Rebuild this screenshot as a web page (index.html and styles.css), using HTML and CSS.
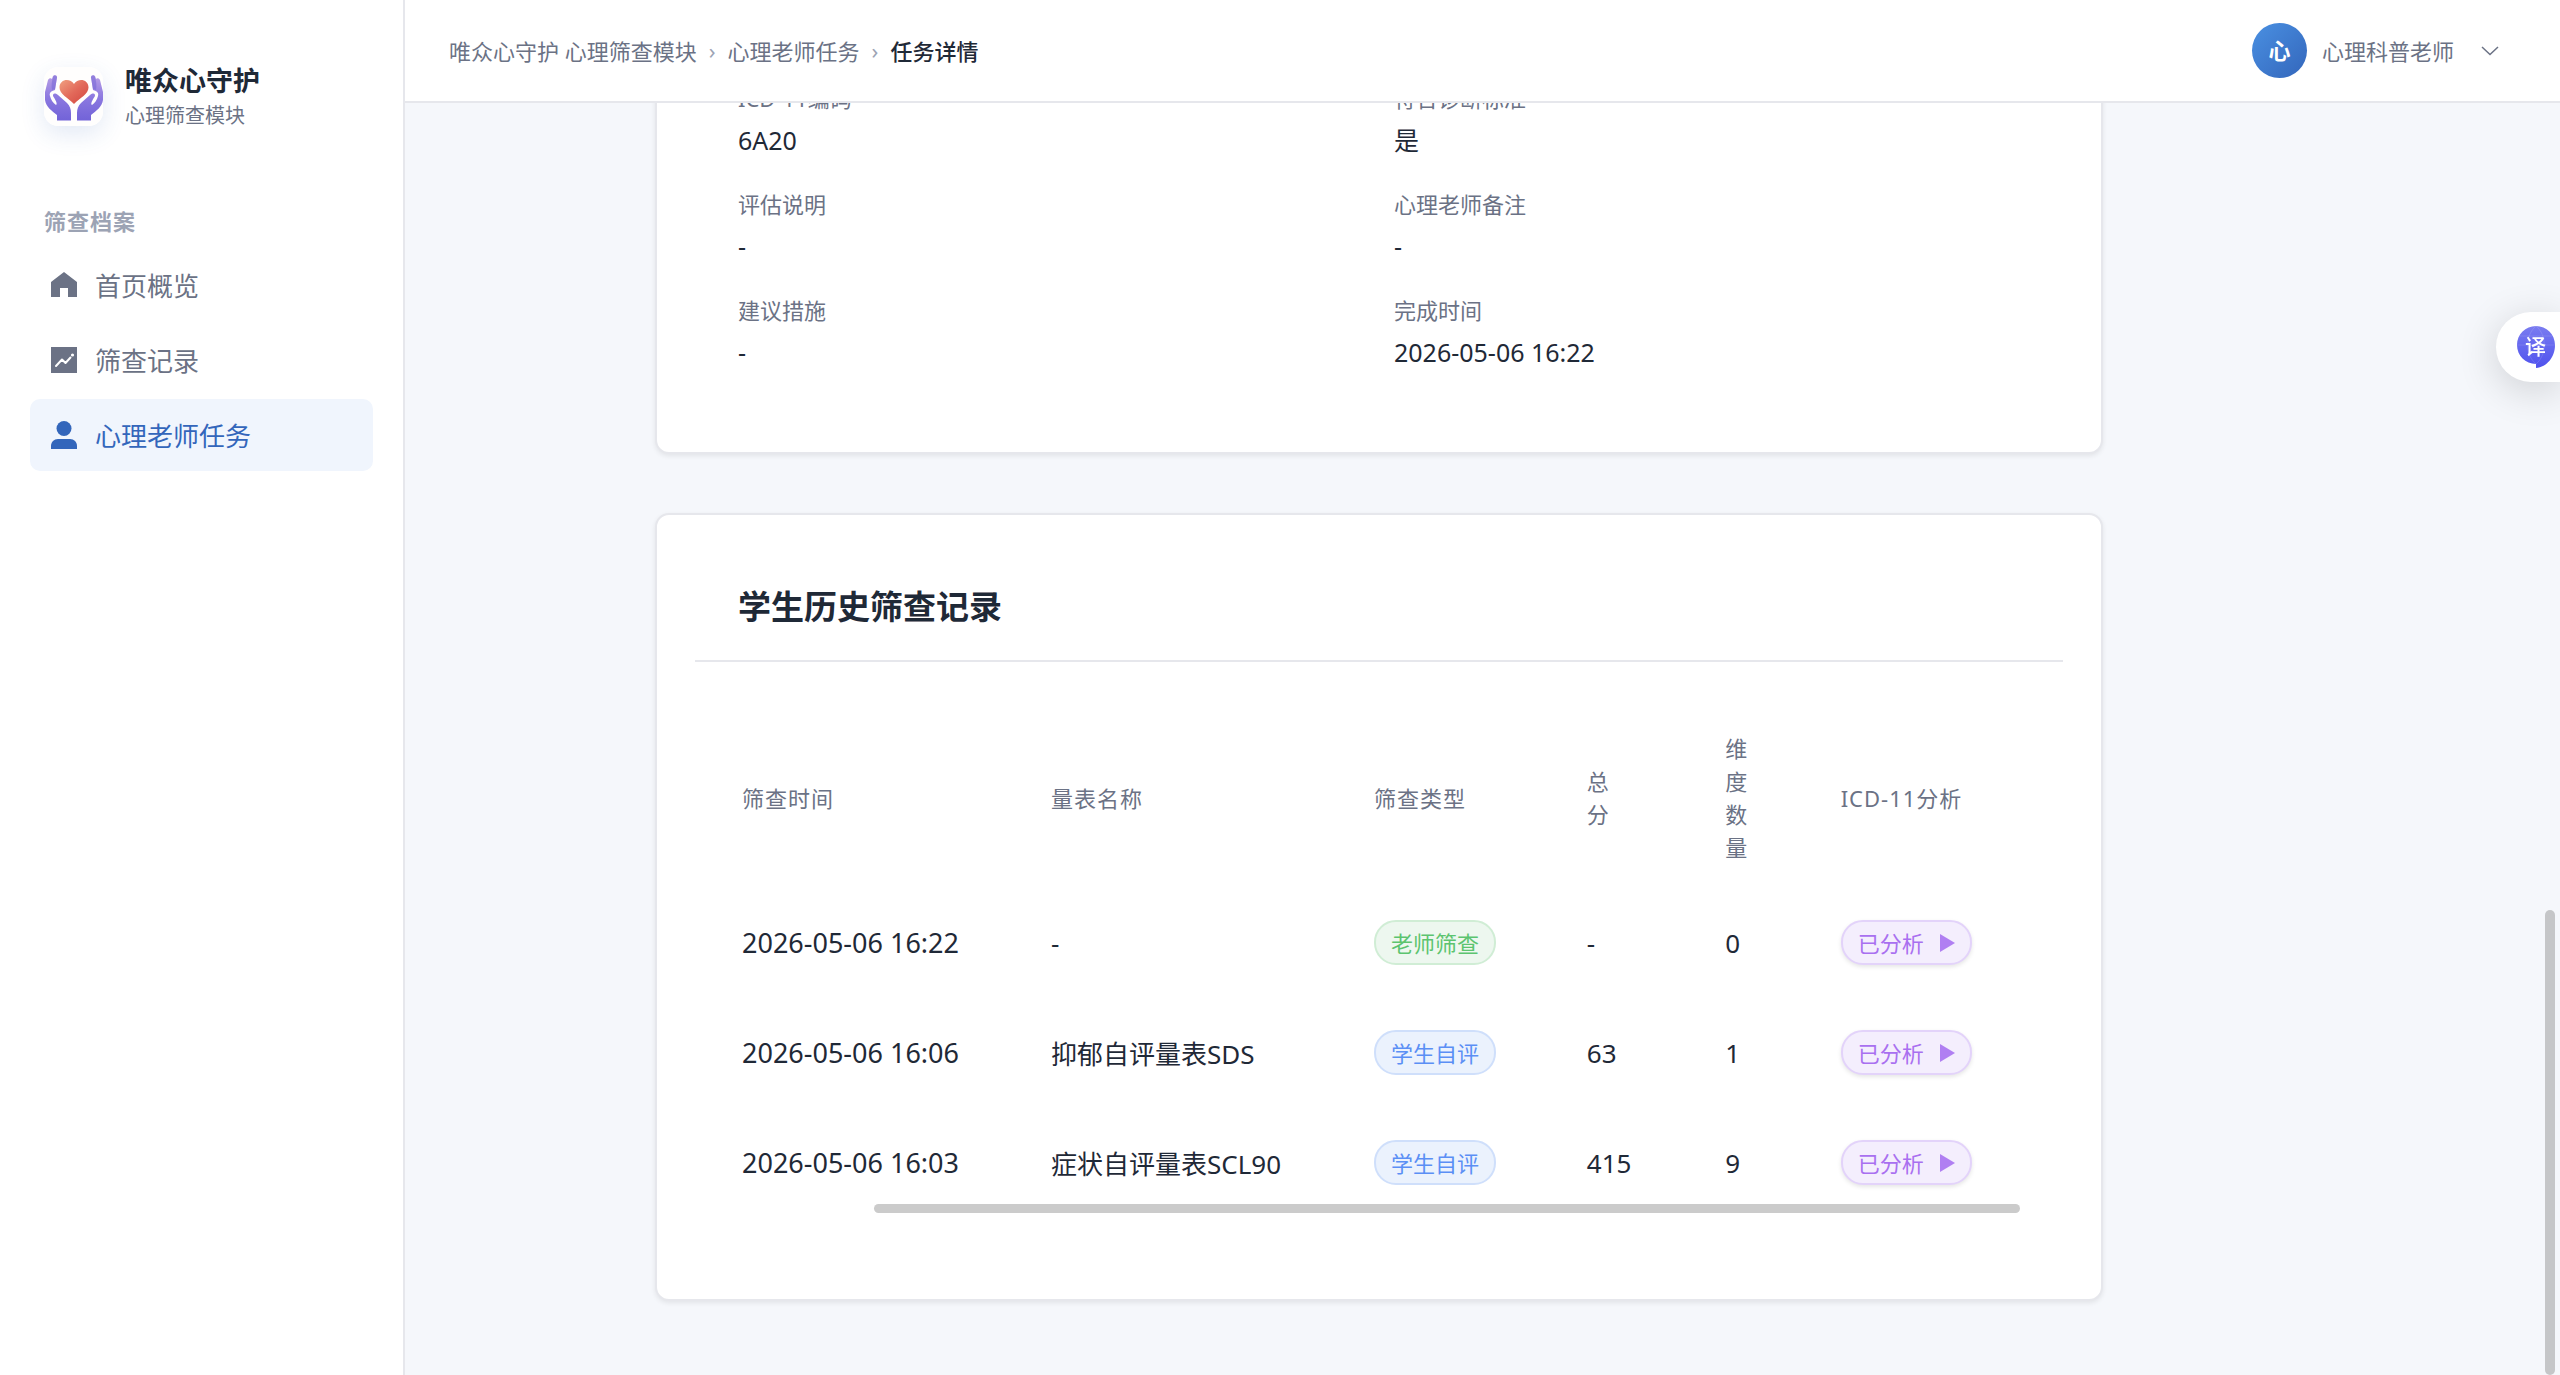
FILE: index.html
```html
<!DOCTYPE html>
<html lang="zh-CN">

<head>
    <meta charset="UTF-8">
    <meta name="viewport" content="width=device-width, initial-scale=1.0">
    <title>任务详情 | 唯众心守护</title>
    <link rel="stylesheet" href="styles.css">
</head>

<body>
    <div class="app">
        <!-- 侧边栏 -->
        <aside class="sidebar">
            <div class="brand">
                <svg class="brand-logo" viewBox="0 0 59 59" aria-hidden="true">
                    <defs>
                        <linearGradient id="hand" x1="0" y1="0" x2="0" y2="1">
                            <stop offset="0" stop-color="#b9a0e6"/>
                            <stop offset="0.5" stop-color="#8b78e0"/>
                            <stop offset="1" stop-color="#7263d8"/>
                        </linearGradient>
                        <linearGradient id="heart" x1="0" y1="0" x2="1" y2="1">
                            <stop offset="0" stop-color="#f0a080"/>
                            <stop offset="0.5" stop-color="#e2695a"/>
                            <stop offset="1" stop-color="#d2463f"/>
                        </linearGradient>
                    </defs>
                    <rect width="59" height="59" rx="14" fill="#fffefd"/>
                    <path fill="url(#heart)" d="M30 37C24 31 15.500 27 15.500 20.500C15.500 12 26 10.500 30 17C34 10.500 44.500 12 44.500 20.500C44.500 27 36 31 30 37Z"/>
                    <g>
                        <path fill="url(#hand)" d="M4 13C5 11 7 10.500 8 12L9 9C10 7.500 13 8 13 10.500L11 23C7 24 5 26 6 29C7 33 9 36 12 38C14 37 11 32 9 29C9 26 11 26 14 28L23 36C26 39 27 42 27 46L27 53.500L13 53.500L13 48C8 44 2 40 1 33L1 25Z"/>
                        <path fill="#7466d6" opacity="0.55" d="M9 10C10 7.500 13 8 13 10.500L11 22L8 23C7 18 8 14 9 10Z"/>
                    </g>
                    <g transform="matrix(-1 0 0 1 60 0)">
                        <path fill="url(#hand)" d="M4 13C5 11 7 10.500 8 12L9 9C10 7.500 13 8 13 10.500L11 23C7 24 5 26 6 29C7 33 9 36 12 38C14 37 11 32 9 29C9 26 11 26 14 28L23 36C26 39 27 42 27 46L27 53.500L13 53.500L13 48C8 44 2 40 1 33L1 25Z"/>
                        <path fill="#7466d6" opacity="0.55" d="M9 10C10 7.500 13 8 13 10.500L11 22L8 23C7 18 8 14 9 10Z"/>
                    </g>
                </svg>
                <div class="brand-text">
                    <div class="brand-title">唯众心守护</div>
                    <div class="brand-subtitle">心理筛查模块</div>
                </div>
            </div>

            <div class="nav-label">筛查档案</div>
            <nav class="nav">
                <a href="#" class="nav-item">
                    <svg class="nav-icon" viewBox="0 0 26 26" fill="currentColor" aria-hidden="true">
                        <path d="M13 0L26 10V25H17V16H9V25H0V10Z"/>
                    </svg>
                    首页概览
                </a>
                <a href="#" class="nav-item">
                    <svg class="nav-icon" viewBox="0 0 26 26" aria-hidden="true">
                        <rect width="26" height="26" fill="currentColor"/>
                        <path d="M5 19L11 12.500L14.500 16L19.500 10.500" fill="none" stroke="#fff" stroke-width="2" stroke-linecap="round" stroke-linejoin="round"/>
                        <circle cx="21.500" cy="8" r="1.600" fill="#fff"/>
                    </svg>
                    筛查记录
                </a>
                <a href="#" class="nav-item active">
                    <svg class="nav-icon" viewBox="0 0 26 28" fill="currentColor" aria-hidden="true">
                        <circle cx="13" cy="7.500" r="7.500"/>
                        <path d="M0 28V25C0 21 3 18 7 18H19C23 18 26 21 26 25V28Z"/>
                    </svg>
                    心理老师任务
                </a>
            </nav>
        </aside>

        <div class="page">
            <!-- 顶部栏 -->
            <header class="topbar">
                <nav class="breadcrumb">
                    <a href="#">唯众心守护 心理筛查模块</a>
                    <span class="separator">›</span>
                    <a href="#">心理老师任务</a>
                    <span class="separator">›</span>
                    <span class="current">任务详情</span>
                </nav>
                <button type="button" class="user-btn">
                    <span class="avatar">心</span>
                    <span class="user-name">心理科普老师</span>
                    <svg class="chevron" viewBox="0 0 18 10" aria-hidden="true">
                        <path d="M1 1L9 8.500L17 1" fill="none" stroke="currentColor" stroke-width="1.500"/>
                    </svg>
                </button>
            </header>

            <main class="content">
                <!-- 评估结果 -->
                <section class="card">
                    <dl class="detail-grid">
                        <div class="detail-item">
                            <dt>ICD-11编码</dt>
                            <dd>6A20</dd>
                        </div>
                        <div class="detail-item">
                            <dt>符合诊断标准</dt>
                            <dd>是</dd>
                        </div>
                        <div class="detail-item">
                            <dt>评估说明</dt>
                            <dd>-</dd>
                        </div>
                        <div class="detail-item">
                            <dt>心理老师备注</dt>
                            <dd>-</dd>
                        </div>
                        <div class="detail-item">
                            <dt>建议措施</dt>
                            <dd>-</dd>
                        </div>
                        <div class="detail-item">
                            <dt>完成时间</dt>
                            <dd>2026-05-06 16:22</dd>
                        </div>
                    </dl>
                </section>

                <!-- 历史记录 -->
                <section class="card">
                    <div class="card-header">
                        <h2>学生历史筛查记录</h2>
                    </div>
                    <div class="table-wrap">
                        <table class="record-table">
                            <thead>
                                <tr>
                                    <th class="col-time">筛查时间</th>
                                    <th class="col-name">量表名称</th>
                                    <th class="col-type">筛查类型</th>
                                    <th class="col-score">总分</th>
                                    <th class="col-count">维度数量</th>
                                    <th class="col-icd">ICD-11分析</th>
                                </tr>
                            </thead>
                            <tbody>
                                <tr>
                                    <td class="time">2026-05-06 16:22</td>
                                    <td>-</td>
                                    <td><span class="tag tag-teacher">老师筛查</span></td>
                                    <td>-</td>
                                    <td>0</td>
                                    <td><button type="button" class="tag tag-analysis">已分析<i class="arrow"></i></button></td>
                                </tr>
                                <tr>
                                    <td class="time">2026-05-06 16:06</td>
                                    <td>抑郁自评量表SDS</td>
                                    <td><span class="tag tag-student">学生自评</span></td>
                                    <td>63</td>
                                    <td>1</td>
                                    <td><button type="button" class="tag tag-analysis">已分析<i class="arrow"></i></button></td>
                                </tr>
                                <tr>
                                    <td class="time">2026-05-06 16:03</td>
                                    <td>症状自评量表SCL90</td>
                                    <td><span class="tag tag-student">学生自评</span></td>
                                    <td>415</td>
                                    <td>9</td>
                                    <td><button type="button" class="tag tag-analysis">已分析<i class="arrow"></i></button></td>
                                </tr>
                            </tbody>
                        </table>
                        <div class="scroll-x"></div>
                    </div>
                </section>
            </main>
        </div>
    </div>

    <div class="scroll-y"></div>

    <!-- 翻译悬浮按钮 -->
    <button type="button" class="translate-btn" aria-label="翻译">
        <svg viewBox="0 0 38 42" aria-hidden="true">
            <defs>
                <linearGradient id="globe" x1="0" y1="0" x2="0" y2="1">
                    <stop offset="0" stop-color="#7a7cf0"/>
                    <stop offset="1" stop-color="#4f52ee"/>
                </linearGradient>
            </defs>
            <path d="M19 0C29.500 0 38 8.500 38 19C38 31 30 41 19 42V38C8.500 38 0 29.500 0 19C0 8.500 8.500 0 19 0Z" fill="url(#globe)"/>
            <path d="M19 0C8 9 8 29 19 38C30 29 30 9 19 0M0 19H38M3 10H35" fill="none" stroke="#fff" opacity="0.12"/>
        </svg>
        <span class="translate-text">译</span>
    </button>
</body>

</html>
```
FILE: styles.css
```css
:root {
    --primary-color: #3366bb;
    --background: #f5f7fb;
    --text-dark: #1f2937;
    --text-muted: #6b7285;
    --text-light: #9ca3b4;
    --border-color: #e6e7ec;
}

* {
    margin: 0;
    padding: 0;
    box-sizing: border-box;
}

body {
    background: var(--background);
    color: var(--text-dark);
    font-family: 'Noto Sans', 'Noto Sans CJK SC', sans-serif;
    font-size: 22px;
    overflow: hidden;
}

a {
    color: inherit;
    text-decoration: none;
}

button {
    border: none;
    background: none;
    color: inherit;
    font: inherit;
    cursor: pointer;
}

.app {
    display: flex;
    height: 100vh;
}

/* 侧边栏 */
.sidebar {
    flex: 0 0 405px;
    padding: 61px 30px 0;
    background: #fff;
    border-right: 2px solid var(--border-color);
}

.brand {
    display: flex;
    align-items: center;
    gap: 22px;
    padding-left: 14px;
    margin-bottom: 72px;
}

.brand-logo {
    width: 59px;
    height: 59px;
    border-radius: 14px;
    box-shadow: 0 8px 24px rgba(51, 102, 187, 0.14);
}

.brand-title {
    font-size: 27px;
    font-weight: 700;
    line-height: 40px;
}

.brand-subtitle {
    font-size: 20px;
    line-height: 30px;
    color: var(--text-muted);
}

.nav-label {
    padding-left: 14px;
    margin-bottom: 10px;
    line-height: 36px;
    font-weight: 700;
    letter-spacing: 1px;
    color: var(--text-light);
}

.nav {
    display: flex;
    flex-direction: column;
    gap: 3px;
}

.nav-item {
    display: flex;
    align-items: center;
    gap: 18px;
    height: 72px;
    padding-left: 21px;
    border-radius: 10px;
    font-size: 26px;
    color: var(--text-muted);
}

.nav-item.active {
    background: #f0f5fd;
    color: var(--primary-color);
}

.nav-icon {
    width: 26px;
    height: 28px;
}

/* 顶部栏 */
.page {
    flex: 1;
    min-width: 0;
    display: flex;
    flex-direction: column;
}

.topbar {
    flex: 0 0 103px;
    display: flex;
    align-items: center;
    justify-content: space-between;
    padding: 0 61px 0 44px;
    background: #fff;
    border-bottom: 2px solid var(--border-color);
}

.breadcrumb {
    display: flex;
    align-items: center;
    gap: 12px;
    padding-bottom: 2px;
    color: var(--text-muted);
}

.separator {
    font-size: 22px;
    color: var(--text-light);
}

.current {
    font-weight: 500;
    color: var(--text-dark);
}

.user-btn {
    display: flex;
    align-items: center;
    gap: 15px;
    color: var(--text-muted);
}

.avatar {
    width: 55px;
    height: 55px;
    border-radius: 50%;
    background: linear-gradient(135deg, #4a90e2, #3366bb);
    color: #fff;
    font-weight: 700;
    line-height: 54px;
    text-align: center;
}

.user-name {
    padding-bottom: 2px;
}

.chevron {
    width: 18px;
    height: 10px;
    margin-left: 12px;
}

/* 内容区，停在底部 */
.content {
    flex: 1;
    min-height: 0;
    display: flex;
    flex-direction: column;
    justify-content: flex-end;
    gap: 59px;
    padding: 0 457px 74px 250px;
    overflow: hidden;
}

.card {
    flex-shrink: 0;
    padding: 38px;
    background: #fff;
    border: 2px solid var(--border-color);
    border-radius: 14px;
    box-shadow: 0 2px 5px rgba(0, 0, 0, 0.08);
}

.detail-grid {
    display: grid;
    grid-template-columns: 1fr 1fr;
    gap: 26px 30px;
    padding: 40px 43px 42px;
}

.detail-item dt {
    margin-bottom: 4px;
    line-height: 36px;
    color: var(--text-muted);
}

.detail-item dd {
    font-size: 25px;
    line-height: 40px;
}

.card-header {
    padding: 32px 43px 31px;
    border-bottom: 2px solid var(--border-color);
}

.card-header h2 {
    font-size: 33px;
    line-height: 44px;
}

/* 记录表格 */
.table-wrap {
    position: relative;
    margin: 48px 43px 43px;
}

.record-table {
    width: 100%;
    table-layout: fixed;
    border-collapse: collapse;
    text-align: left;
}

.record-table th {
    padding: 22px 4px 24px;
    font-weight: 400;
    line-height: 33px;
    letter-spacing: 1px;
    color: var(--text-muted);
}

.record-table td {
    height: 110px;
    padding: 0 4px 1px;
    font-size: 26px;
    white-space: nowrap;
}

.record-table .time {
    font-size: 27px;
}

.col-time {
    width: 24.1%;
}

.col-name {
    width: 25.2%;
}

.col-type {
    width: 16.6%;
}

.col-score {
    width: 10.8%;
}

.col-count {
    width: 9%;
}

.record-table .col-score,
.record-table .col-count {
    padding-right: 90px;
}

.tag {
    display: inline-flex;
    align-items: center;
    height: 45px;
    padding: 0 15px 2px;
    border: 2px solid;
    border-radius: 22px;
    font-size: 22px;
    vertical-align: middle;
}

.tag-teacher {
    background: #edf7ef;
    border-color: #d0edd5;
    color: #5cc46f;
}

.tag-student {
    background: #ebf2fd;
    border-color: #cfdffb;
    color: #5b8ff5;
}

.tag-analysis {
    background: #f4eefd;
    border-color: #e3d3fa;
    color: #a970f0;
    box-shadow: 0 2px 4px rgba(0, 0, 0, 0.1);
}

.arrow {
    margin: 2px 0 0 16px;
    border-left: 15px solid #b07ff2;
    border-top: 9px solid transparent;
    border-bottom: 9px solid transparent;
}

/* 滚动条 */
.scroll-x {
    position: absolute;
    right: 0;
    bottom: 5px;
    width: 1146px;
    height: 9px;
    border-radius: 5px;
    background: #cbcbcb;
}

.scroll-y {
    position: fixed;
    right: 5px;
    bottom: 0;
    width: 10px;
    height: 465px;
    border-radius: 5px;
    background: #c5c6c8;
}

/* 翻译按钮 */
.translate-btn {
    position: fixed;
    top: 312px;
    right: 0;
    width: 64px;
    height: 70px;
    padding-left: 21px;
    border-radius: 35px 0 0 35px;
    background: #fff;
    box-shadow: 0 8px 40px rgba(0, 0, 0, 0.16);
}

.translate-btn svg {
    display: block;
    width: 38px;
    height: 42px;
}

.translate-text {
    position: absolute;
    top: 21px;
    left: 29px;
    font-size: 21px;
    font-weight: 500;
    line-height: 26px;
    color: #fff;
}
```
